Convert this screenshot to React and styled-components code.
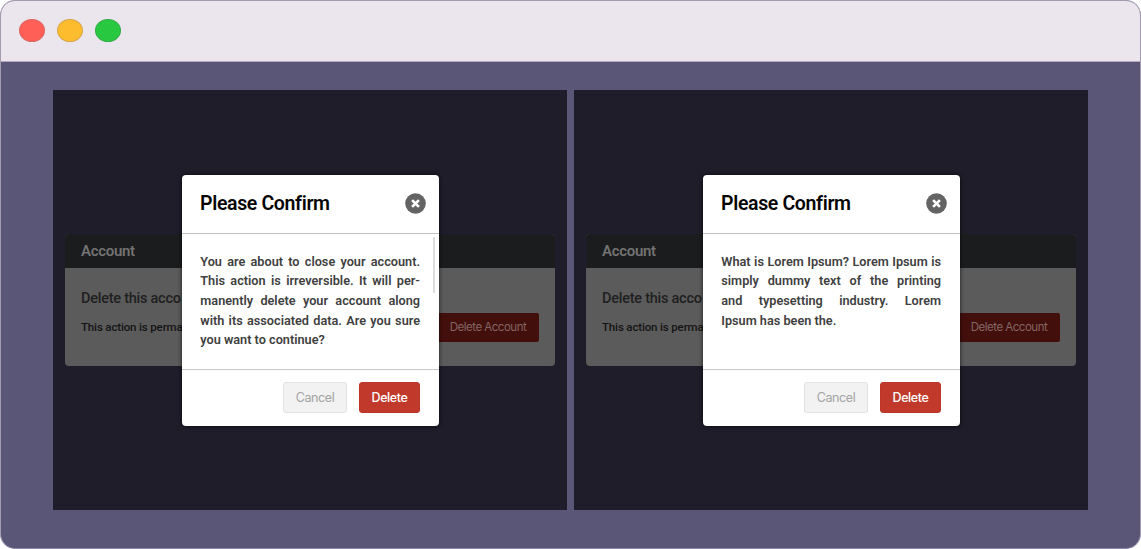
import React from "react";
import styled, { createGlobalStyle } from "styled-components";

const GlobalStyle = createGlobalStyle`
  * { box-sizing: border-box; }
  body { margin: 0; background: #fff; font-family: Roboto, "Liberation Sans", sans-serif; overflow: hidden; }
  h2, h3, p { margin: 0; }
  button { margin: 0; white-space: nowrap; }
`;

const Window = styled.div`
  width: 1141px;
  height: 549px;
  display: flex;
  flex-direction: column;
  border: 1px solid #a39cb0;
  border-bottom-color: #8f89a6;
  border-radius: 15px;
  background: #595678;
  overflow: hidden;
`;

const TitleBar = styled.header`
  flex: 0 0 61px;
  display: flex;
  align-items: center;
  gap: 12px;
  padding: 0 18px 1px;
  background: #ebe6ed;
  border-bottom: 1px solid #b3abbc;
`;

const Light = styled.span`
  width: 26px;
  height: 23px;
  border-radius: 50%;
  background: ${(p) => p.$fill};
  border: 1px solid ${(p) => p.$edge};
`;

const Stage = styled.main`
  display: flex;
  gap: 7px;
  padding: 28px 52px;
`;

const Pane = styled.section`
  position: relative;
  width: 514px;
  height: 420px;
  padding: 144px 12px 0;
  background: #1e1d29;
`;

const Card = styled.div`
  height: 132px;
  width: 490px;
  border-radius: 4px;
  overflow: hidden;
  background: #5b5b5b;
`;

const CardHeader = styled.h2`
  height: 34px;
  padding-left: 16px;
  background: #1b1c1e;
  color: #727272;
  font-size: 15px;
  font-weight: 600;
  line-height: 34px;
  letter-spacing: -0.3px;
`;

const CardBody = styled.div`
  display: flex;
  justify-content: space-between;
  padding: 20px 16px 0;
`;

const CardText = styled.div`
  width: 150px;
  white-space: nowrap;
  overflow: hidden;
`;

const CardTitle = styled.h3`
  font-size: 14.5px;
  font-weight: 500;
  line-height: 21px;
  letter-spacing: -0.25px;
  color: #202020;
`;

const CardNote = styled.p`
  margin-top: 10px;
  font-size: 11.5px;
  font-weight: 500;
  line-height: 16px;
  letter-spacing: -0.15px;
  color: #141414;
`;

const AccountButton = styled.button`
  width: 102px;
  height: 29px;
  margin-top: 25px;
  padding: 0;
  border: 0;
  border-radius: 2px;
  background: #430f0c;
  color: #826663;
  font: 400 11.5px/29px Inter, sans-serif;
  letter-spacing: -0.5px;
`;

const Modal = styled.div`
  position: absolute;
  left: 129px;
  top: 84.5px;
  width: 257px;
  height: 251px;
  display: flex;
  flex-direction: column;
  border-radius: 4px;
  background: #fff;
  box-shadow: 0 0 4px rgba(0, 0, 0, 0.7);
`;

const ModalHeader = styled.div`
  height: 59px;
  display: flex;
  align-items: center;
  justify-content: space-between;
  padding: 0 13px 0 18px;
  border-bottom: 1px solid #c3c3c3;
`;

const ModalTitle = styled.h2`
  font-size: 19.5px;
  font-weight: 600;
  line-height: 28px;
  letter-spacing: -0.35px;
  color: #050505;
`;

const CloseButton = styled.button`
  display: block;
  width: 21px;
  height: 21px;
  padding: 0;
  border: 0;
  background: none;
  svg { display: block; }
`;

const ModalBody = styled.div`
  position: relative;
  height: 135px;
  padding: 18.3px 19px 0 18.3px;
`;

const Scrollbar = styled.span`
  position: absolute;
  right: 4px;
  top: 3px;
  width: 2px;
  height: 56px;
  background: #dcdcdc;
`;

const Line = styled.span`
  display: block;
  height: 19.6px;
  font-size: 12.7px;
  font-weight: 600;
  line-height: 19.6px;
  letter-spacing: 0;
  white-space: nowrap;
  color: #404040;
  text-align: justify;
  text-align-last: ${(p) => (p.$last ? "left" : "justify")};
`;

const ModalFooter = styled.div`
  display: flex;
  flex: 1;
  justify-content: flex-end;
  gap: 12px;
  padding: 12px 19px 0;
  border-top: 1px solid #c3c9c9;
`;

const ActionButton = styled.button`
  width: ${(p) => (p.$danger ? 61 : 64)}px;
  height: 31px;
  padding: 0;
  border: 1px solid ${(p) => (p.$danger ? "#bc3529" : "#e2e2e2")};
  border-radius: 3px;
  background: ${(p) => (p.$danger ? "#c0392b" : "#f2f2f2")};
  color: ${(p) => (p.$danger ? "#fff" : "#a3a3a3")};
  font: ${(p) => (p.$danger ? 500 : 400)} 12.5px/29px Inter, sans-serif;
  letter-spacing: -0.4px;
`;

const panes = [
  {
    scroll: true,
    lines: [
      "You are about to close your account.",
      "This action is irreversible. It will per-",
      "manently delete your account along",
      "with its associated data. Are you sure",
      "you want to continue?",
    ],
  },
  {
    scroll: false,
    lines: [
      "What is Lorem Ipsum? Lorem Ipsum is",
      "simply dummy text of the printing",
      "and typesetting industry. Lorem",
      "Ipsum has been the.",
    ],
  },
];

function ConfirmPane({ lines, scroll }) {
  return (
    <Pane>
      <Card>
        <CardHeader>Account</CardHeader>
        <CardBody>
          <CardText>
            <CardTitle>Delete this acco</CardTitle>
            <CardNote>This action is perma</CardNote>
          </CardText>
          <AccountButton>Delete Account</AccountButton>
        </CardBody>
      </Card>
      <Modal>
        <ModalHeader>
          <ModalTitle>Please Confirm</ModalTitle>
          <CloseButton aria-label="Close">
            <svg width="21" height="21" viewBox="0 0 21 21">
              <circle cx="10.5" cy="10.5" r="10.3" fill="#646464" />
              <path d="M7.1 7.1l6.8 6.8M13.9 7.1l-6.8 6.8" stroke="#fff" strokeWidth="2.7" />
            </svg>
          </CloseButton>
        </ModalHeader>
        <ModalBody>
          {lines.map((text, i) => (
            <Line key={text} $last={i === lines.length - 1}>{text}</Line>
          ))}
          {scroll && <Scrollbar />}
        </ModalBody>
        <ModalFooter>
          <ActionButton>Cancel</ActionButton>
          <ActionButton $danger>Delete</ActionButton>
        </ModalFooter>
      </Modal>
    </Pane>
  );
}

export default function App() {
  return (
    <>
      <GlobalStyle />
      <Window>
        <TitleBar>
          <Light $fill="#ff5f57" $edge="#dc6560" />
          <Light $fill="#fdbc2e" $edge="#d8a54a" />
          <Light $fill="#28c840" $edge="#38ac46" />
        </TitleBar>
        <Stage>
          {panes.map((pane) => (
            <ConfirmPane key={pane.lines[0]} {...pane} />
          ))}
        </Stage>
      </Window>
    </>
  );
}
